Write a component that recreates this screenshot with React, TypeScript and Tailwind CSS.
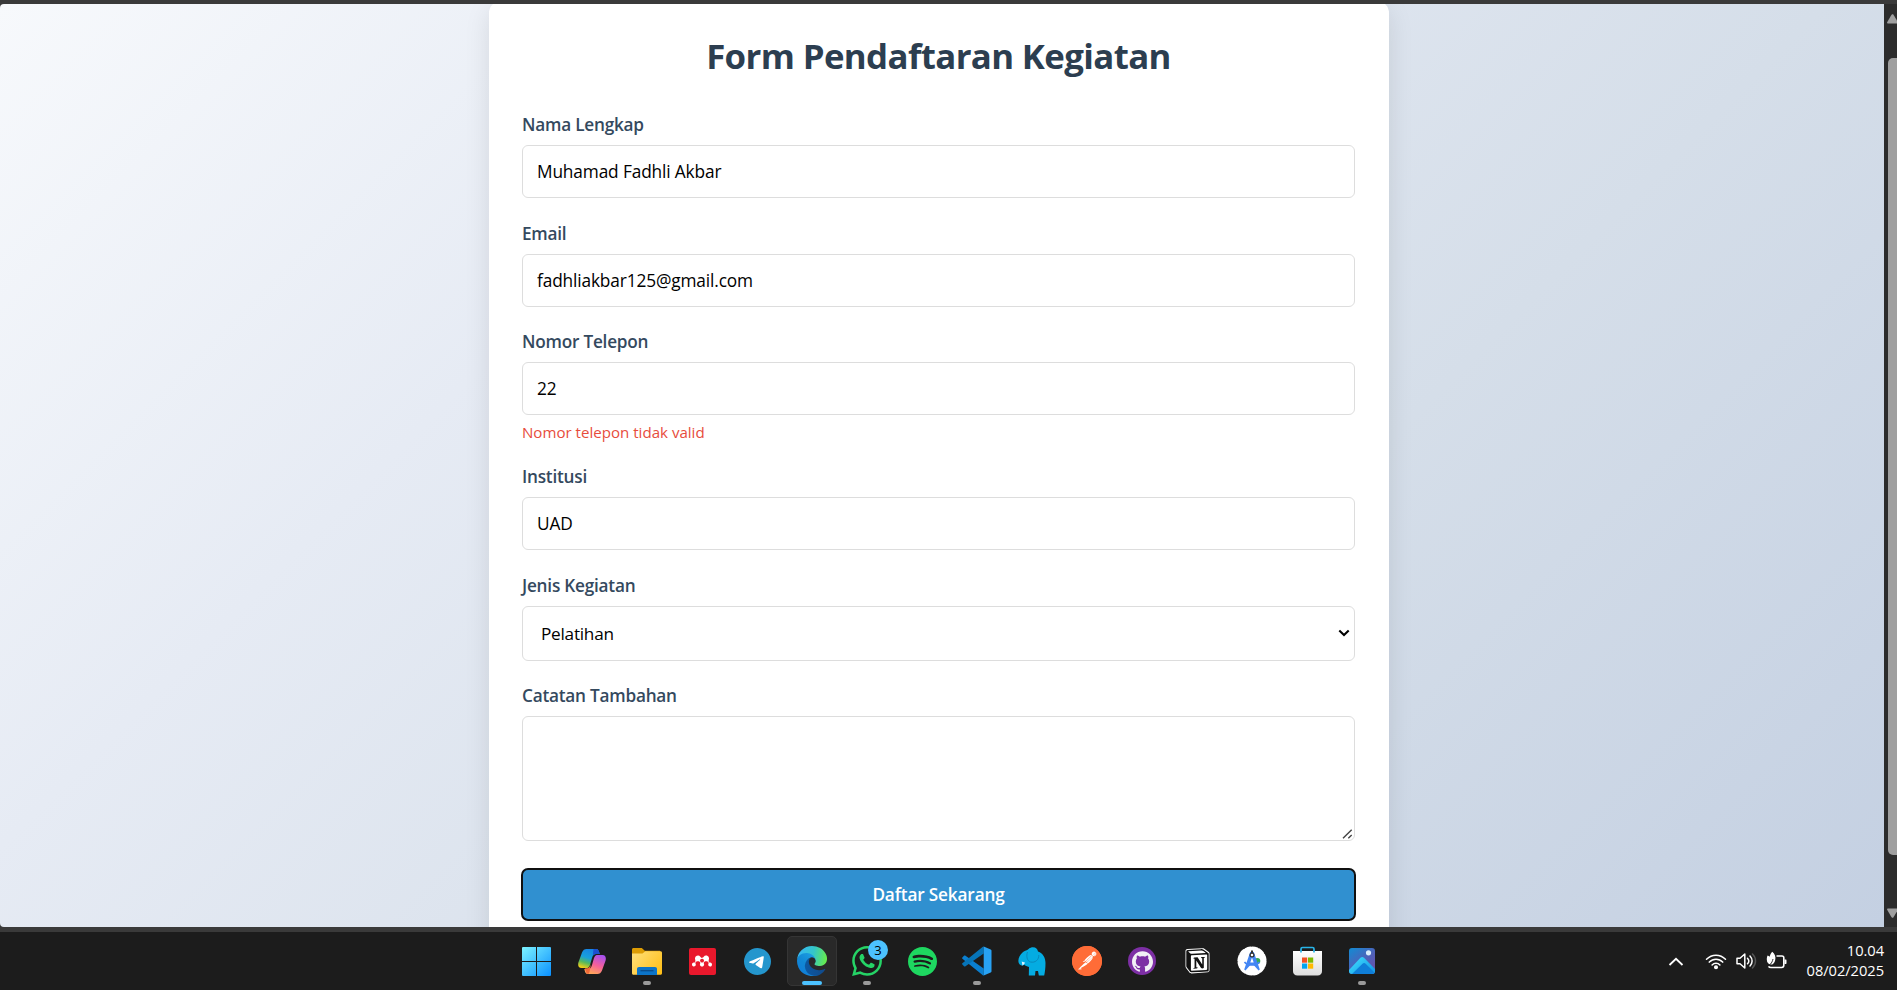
import type { ReactNode } from "react";
import { SiGithub, SiMendeley, SiNotion, SiPostman, SiSpotify, SiTelegram, SiWhatsapp } from "react-icons/si";

const inputClass =
  "block h-[53px] w-full rounded-[6px] border border-[#dddddd] bg-white px-[14px] text-[17.3px] tracking-[-0.14px] text-black outline-none";

function Field({ label, className, children }: { label: string; className?: string; children: ReactNode }) {
  return (
    <div className={className}>
      <label className="mb-2 block h-[25px] pt-px text-[17.2px] leading-6 font-semibold tracking-[-0.22px] text-[#34495e]">{label}</label>
      {children}
    </div>
  );
}

function RegistrationForm() {
  return (
    <div className="-mt-[3px] h-[1000px] w-[900px] shrink-0 rounded-[12px] bg-white pt-[31px] pr-[34px] pl-[33px] shadow-[0_8px_26px_rgba(0,0,0,0.1)]">
      <h1 className="mb-8 h-12 text-center text-[34.8px] leading-12 font-bold tracking-[-0.62px] text-[#2c3e50]">
        Form Pendaftaran Kegiatan
      </h1>
      <Field label="Nama Lengkap">
        <input className={inputClass} defaultValue="Muhamad Fadhli Akbar" />
      </Field>
      <Field label="Email" className="mt-[23px]">
        <input className={inputClass} defaultValue="fadhliakbar125@gmail.com" />
      </Field>
      <Field label="Nomor Telepon" className="mt-[22px]">
        <input className={inputClass} defaultValue="22" />
        <p className="mt-[5px] h-[25px] text-[15.1px] leading-6 text-[#e74c3c]">Nomor telepon tidak valid</p>
      </Field>
      <Field label="Institusi" className="mt-[19px]">
        <input className={inputClass} defaultValue="UAD" />
      </Field>
      <Field label="Jenis Kegiatan" className="mt-[23px]">
        <div className="relative">
          <select className="block h-[55px] w-full appearance-none rounded-[6px] border border-[#dddddd] bg-white pl-[18px] text-[17.2px] tracking-[-0.25px] text-black outline-none">
            <option>Pelatihan</option>
          </select>
          <svg className="pointer-events-none absolute top-[23px] right-[5px]" width="12" height="8" viewBox="0 0 12 8" fill="none">
            <path d="M1.3 1.6 6 6l4.7-4.4" stroke="#000" strokeWidth="2.1" />
          </svg>
        </div>
      </Field>
      <Field label="Catatan Tambahan" className="mt-[22px]">
        <div className="relative">
          <textarea className="block h-[125px] w-full resize-none rounded-[6px] border border-[#dddddd] bg-white outline-none" />
          <svg className="pointer-events-none absolute right-[2px] bottom-[2px]" width="11" height="10" viewBox="0 0 11 10" fill="none">
            <path d="M1 9.3 9.7.8M6.3 9.3l3.4-3.2" stroke="#444" strokeWidth="1.4" />
          </svg>
        </div>
      </Field>
      <button className="-mx-px mt-[27px] block h-[53px] w-[835px] rounded-[7px] border-2 border-[#101010] bg-[#3090d0] text-[17.2px] font-semibold tracking-[-0.15px] text-white">
        Daftar Sekarang
      </button>
    </div>
  );
}

function WindowsIcon() {
  return (
    <svg width="29" height="29" viewBox="0 0 29 29" className="-translate-x-px">
      <defs>
        <linearGradient id="win" x1="0" y1="0" x2="29" y2="29" gradientUnits="userSpaceOnUse">
          <stop stopColor="#7df3ff" />
          <stop offset="1" stopColor="#0a90ff" />
        </linearGradient>
      </defs>
      <path fill="url(#win)" d="M1 0h13v14H0V1a1 1 0 0 1 1-1zM15 0h13a1 1 0 0 1 1 1v13H15zM0 15h14v14H1a1 1 0 0 1-1-1zM15 15h14v13a1 1 0 0 1-1 1H15z" />
    </svg>
  );
}

function CopilotIcon() {
  const ribbon =
    "M8.500 0H18c2.500 0 3 2 3.700 5h-3.200C16 5 15 6 14 9l-2 7c-1 2.500-2 3-4 3H3.500C.5 19-.3 16.500.4 13.500L4 3.500C5 1 6.500 0 8.500 0z";
  return (
    <svg width="28" height="25" viewBox="0 0 28 25">
      <defs>
        <linearGradient id="cpA" x1="12" y1="0" x2="6" y2="19" gradientUnits="userSpaceOnUse">
          <stop stopColor="#1784e4" />
          <stop offset="0.45" stopColor="#18a0dc" />
          <stop offset="0.72" stopColor="#57b95c" />
          <stop offset="1" stopColor="#f2d018" />
        </linearGradient>
        <linearGradient id="cpB" x1="12" y1="0" x2="5" y2="19" gradientUnits="userSpaceOnUse">
          <stop stopColor="#ffa45c" />
          <stop offset="0.45" stopColor="#f5609a" />
          <stop offset="1" stopColor="#a550f0" />
        </linearGradient>
      </defs>
      <path d={ribbon} fill="url(#cpB)" transform="rotate(180 14 12.500)" />
      <path d={ribbon} fill="url(#cpA)" />
      <path d="M15.500 0H18c2.500 0 3 2 3.700 5h-3.200C16.500 5 15.500 5.500 14.800 6.800z" fill="#1c4fd0" />
      <path d="M7 19.200h2c2 0 3-1.500 4-4.200l-1.500 8c-.3 1.300-1 2-1.500 2-1.500 0-2.300-2.500-3-5.800z" fill="#f06a38" />
    </svg>
  );
}

function FolderIcon() {
  return (
    <svg width="30" height="27" viewBox="0 0 30 27">
      <defs>
        <linearGradient id="fold" x1="0" y1="3" x2="30" y2="27" gradientUnits="userSpaceOnUse">
          <stop stopColor="#ffe07c" />
          <stop offset="1" stopColor="#ffbe14" />
        </linearGradient>
      </defs>
      <path d="M0 1.500C0 .6.600 0 1.500 0h8.300l3 2.800H28V10H0z" fill="#dd9c04" />
      <path d="M0 5.500h10.500l2.800-2.300h15.200c.9 0 1.500.6 1.500 1.500v20.600c0 .9-.6 1.500-1.500 1.500h-27c-.9 0-1.500-.6-1.500-1.500z" fill="url(#fold)" />
      <path d="M5 27v-6c0-1.200.8-2 2-2h16c1.200 0 2 .8 2 2v6z" fill="#0c74c8" />
      <path d="M8.500 22.700h13" stroke="#0a4c8c" strokeWidth="1.300" />
    </svg>
  );
}

function MendeleyIcon() {
  return (
    <div className="flex size-[27px] items-center justify-center rounded-[2px] bg-[#e9182c] text-white">
      <SiMendeley size={20} />
    </div>
  );
}

function TelegramIcon() {
  return (
    <svg width="27" height="27" viewBox="0 0 27 27">
      <defs>
        <linearGradient id="tg" x1="0" y1="0" x2="0" y2="27" gradientUnits="userSpaceOnUse">
          <stop stopColor="#34a8df" />
          <stop offset="1" stopColor="#1580b8" />
        </linearGradient>
      </defs>
      <circle cx="13.500" cy="13.500" r="12" fill="#fff" />
      <SiTelegram size={27} color="#2496cd" />
    </svg>
  );
}

function EdgeIcon() {
  return (
    <svg width="30" height="30" viewBox="0 0 256 256">
      <defs>
        <linearGradient id="edA" x1="63" y1="177" x2="241" y2="177" gradientUnits="userSpaceOnUse">
          <stop stopColor="#0c59a4" />
          <stop offset="1" stopColor="#114a8b" />
        </linearGradient>
        <linearGradient id="edB" x1="157" y1="90" x2="46" y2="222" gradientUnits="userSpaceOnUse">
          <stop stopColor="#1b9de2" />
          <stop offset="0.6" stopColor="#1187d4" />
          <stop offset="1" stopColor="#1180d8" />
        </linearGradient>
        <linearGradient id="edC" x1="20" y1="60" x2="250" y2="110" gradientUnits="userSpaceOnUse">
          <stop stopColor="#35b8f1" />
          <stop offset="0.5" stopColor="#34c6c8" />
          <stop offset="1" stopColor="#66eb4c" />
        </linearGradient>
      </defs>
      <path fill="url(#edA)" d="M235.7 195.5a93.7 93.7 0 0 1-10.6 4.7 101.9 101.9 0 0 1-35.9 6.4c-47.3 0-88.5-32.5-88.5-74.3a31.5 31.5 0 0 1 16.4-27.3c-42.800 1.800-53.800 46.400-53.800 72.500 0 74 68.100 81.400 82.800 81.400 7.900 0 19.800-2.300 27-4.600l1.300-.4a128.300 128.300 0 0 0 66.600-52.800 4 4 0 0 0-5.300-5.600Z" />
      <path fill="url(#edB)" d="M105.700 241.400a79.200 79.200 0 0 1-22.700-21.300 80.700 80.700 0 0 1 29.500-120c3.200-1.500 8.500-4.100 15.600-4a32.400 32.400 0 0 1 25.700 13 31.900 31.900 0 0 1 6.300 18.700c0-.2 24.500-79.600-80-79.600-43.900 0-80 41.600-80 78.200a130.200 130.200 0 0 0 12.100 56 128 128 0 0 0 156.400 67 75.500 75.500 0 0 1-62.800-8Z" />
      <path fill="url(#edC)" d="M152.300 148.900c-.9 1-3.400 2.500-3.400 5.600 0 2.600 1.700 5.100 4.800 7.300 14.400 10.100 41.700 8.700 41.800 8.700a59.600 59.600 0 0 0 30.300-8.400 61.400 61.400 0 0 0 30.400-52.900c.3-22.400-8-37.300-11.300-43.900C223.500 23.900 177.700 0 128 0A128 128 0 0 0 0 126.200c.5-36.500 36.800-66 80-66 3.500 0 23.500.3 42 10a72.600 72.600 0 0 1 30.900 29.300c6.100 10.600 7.200 24.100 7.200 29.500s-2.700 13.300-7.800 19.900Z" />
    </svg>
  );
}

function WhatsappIcon() {
  return (
    <div className="relative">
      <SiWhatsapp size={30} color="#25d366" />
      <span className="absolute -top-[6px] left-[16px] flex size-5 items-center justify-center rounded-full bg-[#4cc2ff] text-[13px] leading-none text-black">
        3
      </span>
    </div>
  );
}

function VscodeIcon() {
  return (
    <svg width="30" height="30" viewBox="0 0 30 30">
      <path d="M.4 11.400 2 9.700c.5-.4 1-.4 1.500 0L21.700 22.500v7.100c-.5-.1-.9-.3-1.200-.7L.4 12.800c-.5-.4-.5-1 0-1.400z" fill="#0a7fd0" />
      <path d="M.4 18.600 2 20.300c.5.4 1 .4 1.500 0L21.700 7.500V.4c-.5.1-.9.3-1.200.7L.4 17.200c-.5.4-.5 1 0 1.400z" fill="#0674b8" />
      <path d="M21.700.4 28.700 3.400c.5.3.8.7.8 1.300v20.600c0 .6-.3 1-.8 1.300l-7 3z" fill="#28a2f3" />
    </svg>
  );
}

function MampIcon() {
  return (
    <svg width="28" height="29" viewBox="0 0 28 29">
      <path
        d="M4.500 5.500C6 3.500 8.500 4 10 2.500 12 .6 13.500.3 15 .3c3 0 4.500 2 5 4.200 5 1.500 7.500 6.500 7.500 11.500 0 5-.6 9.500-1.300 12.500h-5.400l-.8-4.500h-2.500l-.5 4.500h-6.200l.2-8.500c-2-.3-3.700-1.200-4.700-2.200-1.300 1-3.700 1.200-5.300-1.300C-.8 13 1.500 8 4.500 5.500z"
        fill="#04ace2"
      />
      <path d="M9.500 5c-1.500 4-.5 9 3 10 4.500 1 8.500-2 8.300-7" fill="none" stroke="#0889bd" strokeWidth="1" />
      <path d="M3.700 14.500l3.500 1.200-2.700 3z" fill="#dff4ff" />
    </svg>
  );
}

function PostmanIcon() {
  return (
    <div className="flex size-[30px] items-center justify-center rounded-full bg-[#ff6c37]">
      <div className="flex size-[27px] items-center justify-center rounded-full bg-white">
        <SiPostman size={30} color="#ff6c37" className="shrink-0" />
      </div>
    </div>
  );
}

function GithubIcon() {
  return (
    <div className="flex size-7 items-center justify-center rounded-full bg-[#7d2fa5] text-[#f2f0f6]">
      <SiGithub size={21} />
    </div>
  );
}

function NotionIcon() {
  return (
    <svg width="25" height="26" viewBox="0 0 25 26">
      <path d="M2.500.9 17.500.3c.8 0 1.300.1 1.800.5l4.500 3.200c.5.4.7.8.7 1.500v16.700c0 1.100-.7 1.900-1.800 2L6.500 25.400c-1 0-1.500-.2-2-.9L1.200 20.300C.7 19.600.5 19 .5 18.300V2.800C.5 1.700 1.300 1 2.500.9z" fill="#fff" />
      <g transform="translate(0.800 1.100)">
        <SiNotion size={23.400} color="#111" />
      </g>
    </svg>
  );
}

function AndroidStudioIcon() {
  return (
    <svg width="30" height="30" viewBox="0 0 30 30">
      <circle cx="15" cy="15" r="13.300" fill="#fff" />
      <circle cx="15" cy="15" r="13.300" fill="none" stroke="#fff" strokeWidth="2.600" strokeDasharray="4.960 2" strokeLinecap="round" />
      <circle cx="20.300" cy="15" r="3" fill="#34a853" />
      <path d="M13.200 6h3.600l6 17.500-1.200 1-5-5.500h-3.200l-5 5.500-1.200-1z" fill="#4285f4" />
      <path d="M15 11.500l1.700 5h-3.400z" fill="#fff" />
      <path d="M7.500 16c3 4 12 4 15 0" fill="none" stroke="#4285f4" strokeWidth="1.700" />
      <path d="M14 4.500h2V7h-2z" fill="#333" />
      <circle cx="15" cy="9" r="1.900" fill="#fff" stroke="#333" strokeWidth="1.200" />
    </svg>
  );
}

function StoreIcon() {
  return (
    <svg width="29" height="30" viewBox="0 0 29 30">
      <defs>
        <linearGradient id="bag" x1="0" y1="5" x2="0" y2="30" gradientUnits="userSpaceOnUse">
          <stop stopColor="#fff" />
          <stop offset="1" stopColor="#dcdcdc" />
        </linearGradient>
      </defs>
      <path d="M0 5h29v20c0 2.800-1.700 4.500-4.500 4.500h-20C1.700 29.500 0 27.800 0 25z" fill="url(#bag)" />
      <path d="M8 6.500V3c0-.9.600-1.500 1.500-1.500h10c.9 0 1.500.6 1.500 1.500v3.500" fill="none" stroke="#28b4e8" strokeWidth="1.700" />
      <path d="M9 11.500h5.200v5.200H9z" fill="#f25022" />
      <path d="M15 11.500h5.200v5.200H15z" fill="#7fba00" />
      <path d="M9 17.500h5.200v5.200H9z" fill="#00a4ef" />
      <path d="M15 17.500h5.200v5.200H15z" fill="#ffb900" />
    </svg>
  );
}

function PhotosIcon() {
  return (
    <svg width="26" height="26" viewBox="0 0 26 26">
      <defs>
        <linearGradient id="sky" x1="2" y1="0" x2="22" y2="26" gradientUnits="userSpaceOnUse">
          <stop stopColor="#1589d2" />
          <stop offset="0.55" stopColor="#5060b8" />
          <stop offset="1" stopColor="#6a4fa8" />
        </linearGradient>
        <linearGradient id="hill" x1="5" y1="10" x2="18" y2="26" gradientUnits="userSpaceOnUse">
          <stop stopColor="#3cd8fc" />
          <stop offset="1" stopColor="#18a0e8" />
        </linearGradient>
        <clipPath id="frame">
          <rect width="26" height="26" rx="3" />
        </clipPath>
      </defs>
      <g clipPath="url(#frame)">
        <path d="M0 0h26v26H0z" fill="url(#sky)" />
        <path d="M-2 24 11.500 9.800c1.100-1.100 2.400-1.100 3.500 0L29 24v5H-2z" fill="url(#hill)" />
        <path d="M3 26l10.500-10.200c1-1 2.200-1 3.200 0L27 26z" fill="#0f7ed8" />
        <circle cx="19.500" cy="4.800" r="2.600" fill="#d8ecfa" />
      </g>
    </svg>
  );
}

const apps: { name: string; icon: ReactNode; state?: "open" | "active" }[] = [
  { name: "Start", icon: <WindowsIcon /> },
  { name: "Copilot", icon: <CopilotIcon /> },
  { name: "Explorer", icon: <FolderIcon />, state: "open" },
  { name: "Mendeley", icon: <MendeleyIcon /> },
  { name: "Telegram", icon: <TelegramIcon /> },
  { name: "Edge", icon: <EdgeIcon />, state: "active" },
  { name: "WhatsApp", icon: <WhatsappIcon />, state: "open" },
  { name: "Spotify", icon: <SiSpotify size={29} color="#1ed760" /> },
  { name: "VS Code", icon: <VscodeIcon />, state: "open" },
  { name: "MAMP", icon: <MampIcon /> },
  { name: "Postman", icon: <PostmanIcon /> },
  { name: "GitHub", icon: <GithubIcon /> },
  { name: "Notion", icon: <NotionIcon /> },
  { name: "Android Studio", icon: <AndroidStudioIcon /> },
  { name: "Store", icon: <StoreIcon /> },
  { name: "Photos", icon: <PhotosIcon />, state: "open" },
];

function Tray() {
  return (
    <div className="flex h-full items-center text-white">
      <svg width="16" height="10" viewBox="0 0 16 10" className="mr-[21px] mt-px" fill="none">
        <path d="M1.500 8 8 1.800 14.500 8" stroke="#fff" strokeWidth="1.800" />
      </svg>
      <svg width="22" height="17" viewBox="0 0 22 17" className="mr-[9px]" fill="none" stroke="#fff" strokeWidth="1.500" strokeLinecap="round">
        <path d="M1.500 6.200c5.300-5.400 13.700-5.400 19 0M4.300 9.100c3.700-3.900 9.700-3.900 13.400 0M7.100 11.900c2.100-2.300 5.700-2.300 7.800 0" />
        <circle cx="11" cy="14.300" r="1.300" fill="#fff" />
      </svg>
      <svg width="22" height="18" viewBox="0 0 22 18" className="mr-[8px]" fill="none" stroke="#fff" strokeWidth="1.500" strokeLinecap="round" strokeLinejoin="round">
        <path d="M1 6.200h3L8.800 2v14L4 11.800H1z" />
        <path d="M11.500 6.200c1.500 1.600 1.500 4 0 5.600M14 4c2.800 2.900 2.800 7.100 0 10" />
        <path d="M16.500 2c4 4 4 10 0 14" stroke="#555" />
      </svg>
      <svg width="22" height="20" viewBox="0 0 22 20" className="mr-[18px] -mt-px" fill="none">
        <path d="M10.500 5h5.500c1 0 1.800.8 1.800 1.800v7.500c0 1.300-.9 2.200-2.200 2.200H5c-1.300 0-2-.4-2.500-1.200" stroke="#fff" strokeWidth="1.600" />
        <path d="M18.500 8.500h1c.8 0 1 .3 1 1v2.500c0 .7-.2 1-1 1h-1z" fill="#fff" />
        <path d="M6.300.8c2.600 2.200 3.700 5.200 2.900 8.200-.4 2-1.500 3.600-3 4.500C3 13.800.8 12 .8 8.500c0-1.500.3-3 .8-4 .8.300 1.500.8 2 1.300C4 4 5 2 6.300.8z" fill="#fff" />
        <path d="M1 15c2.500-.5 5-2.500 6-7" stroke="#1c1c1c" strokeWidth="0.900" />
      </svg>
      <div className="-mt-[3px] w-[78px] text-right text-[14.700px] leading-5 tracking-[-0.050px]">
        <div>10.04</div>
        <div>08/02/2025</div>
      </div>
    </div>
  );
}

function Taskbar() {
  return (
    <div className="flex h-[58px] items-start justify-between bg-[#1c1c1c] pr-[13px] pl-[512px]">
      <div className="flex gap-[5px] pt-1">
        {apps.map(({ name, icon, state }) => (
          <div
            key={name}
            className={
              state === "active"
                ? "relative flex size-[50px] items-center justify-center rounded-[5px] border border-[#353535] bg-[#292929]"
                : "relative flex size-[50px] items-center justify-center"
            }
          >
            {icon}
            {state === "active" && <span className="absolute bottom-0 left-[14px] h-1 w-5 rounded-full bg-[#4cc2ff]" />}
            {state === "open" && <span className="absolute bottom-px left-[21px] h-1 w-2 rounded-full bg-[#9a9a9a]" />}
          </div>
        ))}
      </div>
      <Tray />
    </div>
  );
}

export default function App() {
  return (
    <div className="flex h-[990px] w-[1897px] flex-col overflow-hidden bg-[#3a3a3a] pt-1 font-['Open_Sans',sans-serif]">
      <div className="flex h-[923px] overflow-hidden">
        <main className="flex w-[1884px] items-start justify-center overflow-hidden rounded-l-[4px] bg-[linear-gradient(135deg,#f7f9fc_0%,#e6ebf4_30%,#d5dee9_65%,#c4d0e2_100%)] pr-[6px]">
          <RegistrationForm />
        </main>
        <div className="flex w-[13px] flex-col items-end justify-between bg-[#2c2c2c] pt-2.5 pb-[9px]">
          <svg width="10" height="10" viewBox="0 0 10 10">
            <path d="M6 0 11 8v1.500H.5L0 8.500 4.500.8z" fill="#9f9f9f" />
          </svg>
          <div className="mt-[34px] mb-auto h-[797px] w-[9px] rounded-l-[5px] bg-[#9f9f9f]" />
          <svg width="10" height="10" viewBox="0 0 10 10">
            <path d="M6 10 11 2V.5H.5L0 1.500 4.500 9.200z" fill="#9f9f9f" />
          </svg>
        </div>
      </div>
      <div className="h-[5px]" />
      <Taskbar />
    </div>
  );
}
